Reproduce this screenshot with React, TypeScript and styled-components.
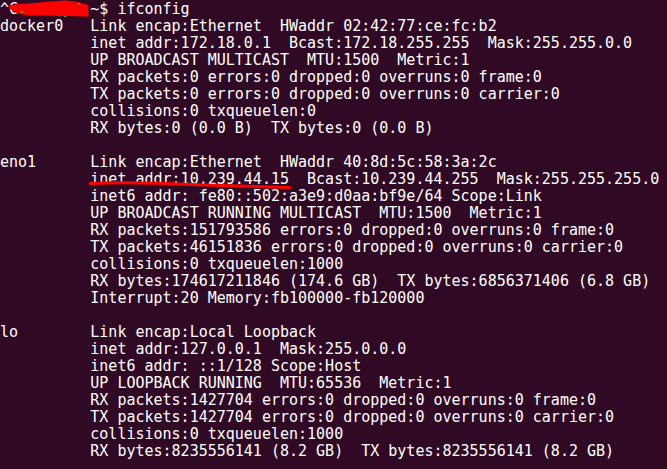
import React from "react";
import styled, { createGlobalStyle } from "styled-components";

const GlobalStyle = createGlobalStyle`
  html, body {
    margin: 0;
    padding: 0;
    background: #300a24;
  }
  body {
    width: 667px;
    height: 469px;
    overflow: hidden;
  }
`;

const Screen = styled.div`
  position: relative;
  width: 667px;
  height: 469px;
  padding-top: 1px;
  box-sizing: border-box;
  background: #300a24;
  overflow: hidden;
`;

const Terminal = styled.div`
  font-family: "DejaVu Sans Mono", "Liberation Mono", monospace;
  font-size: 15px;
  line-height: 17px;
  color: #ffffff;
  white-space: pre;
`;

const Line = styled.div`
  height: 17px;
`;

const Prompt = styled.span<{ $tone?: "green" | "white" }>`
  color: ${(p) => (p.$tone === "green" ? "#8ae234" : "#ffffff")};
`;

const Block = styled.section`
  display: grid;
  grid-template-columns: 10ch 1fr;
  margin-bottom: 17px;
`;

const IfaceName = styled.div``;

const Details = styled.div`
  display: flex;
  flex-direction: column;
`;

const Scribble = styled.svg`
  position: absolute;
  left: 0;
  top: 0;
  width: 100px;
  height: 20px;
  pointer-events: none;
`;

const Underline = styled.svg`
  position: absolute;
  left: 80px;
  top: 175px;
  width: 220px;
  height: 20px;
  pointer-events: none;
`;

type Iface = { name: string; lines: string[] };

const ifaces: Iface[] = [
  {
    name: "docker0",
    lines: [
      "Link encap:Ethernet  HWaddr 02:42:77:ce:fc:b2",
      "inet addr:172.18.0.1  Bcast:172.18.255.255  Mask:255.255.0.0",
      "UP BROADCAST MULTICAST  MTU:1500  Metric:1",
      "RX packets:0 errors:0 dropped:0 overruns:0 frame:0",
      "TX packets:0 errors:0 dropped:0 overruns:0 carrier:0",
      "collisions:0 txqueuelen:0",
      "RX bytes:0 (0.0 B)  TX bytes:0 (0.0 B)",
    ],
  },
  {
    name: "eno1",
    lines: [
      "Link encap:Ethernet  HWaddr 40:8d:5c:58:3a:2c",
      "inet addr:10.239.44.15  Bcast:10.239.44.255  Mask:255.255.255.0",
      "inet6 addr: fe80::502:a3e9:d0aa:bf9e/64 Scope:Link",
      "UP BROADCAST RUNNING MULTICAST  MTU:1500  Metric:1",
      "RX packets:151793586 errors:0 dropped:0 overruns:0 frame:0",
      "TX packets:46151836 errors:0 dropped:0 overruns:0 carrier:0",
      "collisions:0 txqueuelen:1000",
      "RX bytes:174617211846 (174.6 GB)  TX bytes:6856371406 (6.8 GB)",
      "Interrupt:20 Memory:fb100000-fb120000",
    ],
  },
  {
    name: "lo",
    lines: [
      "Link encap:Local Loopback",
      "inet addr:127.0.0.1  Mask:255.0.0.0",
      "inet6 addr: ::1/128 Scope:Host",
      "UP LOOPBACK RUNNING  MTU:65536  Metric:1",
      "RX packets:1427704 errors:0 dropped:0 overruns:0 frame:0",
      "TX packets:1427704 errors:0 dropped:0 overruns:0 carrier:0",
      "collisions:0 txqueuelen:1000",
      "RX bytes:8235556141 (8.2 GB)  TX bytes:8235556141 (8.2 GB)",
    ],
  },
];

export default function App() {
  return (
    <>
      <GlobalStyle />
      <Screen>
        <Terminal>
          <Line>
            <Prompt>^C</Prompt>
            <Prompt $tone="green">user@pc:</Prompt>
            <Prompt>~$ ifconfig</Prompt>
          </Line>
          {ifaces.map((it) => (
            <Block key={it.name}>
              <IfaceName>{it.name}</IfaceName>
              <Details>
                {it.lines.map((l, i) => (
                  <Line key={i}>{l}</Line>
                ))}
              </Details>
            </Block>
          ))}
        </Terminal>
        <Scribble width="100" height="20" viewBox="0 0 100 20">
          <path
            d="M10,5 C15,4 25,4 35,3 C45,2 55,1 65,0.5 C75,1 82,3 88.5,5 L88.5,16.5 C75,16.5 50,15.5 30,15.5 C22,15 15,13 10,9 Z"
            fill="#ff0000"
          />
          <rect x="21" y="11" width="2" height="2" fill="#4caf20" />
          <rect x="78" y="3" width="2" height="1.5" fill="#4caf20" />
        </Scribble>
        <Underline width="220" height="20" viewBox="0 0 220 20">
          <path
            d="M10,8.5 C40,7 80,8 110,9.5 C150,11 185,12 210,12.5"
            fill="none"
            stroke="#ff0000"
            strokeWidth="3"
            strokeLinecap="round"
          />
        </Underline>
      </Screen>
    </>
  );
}
